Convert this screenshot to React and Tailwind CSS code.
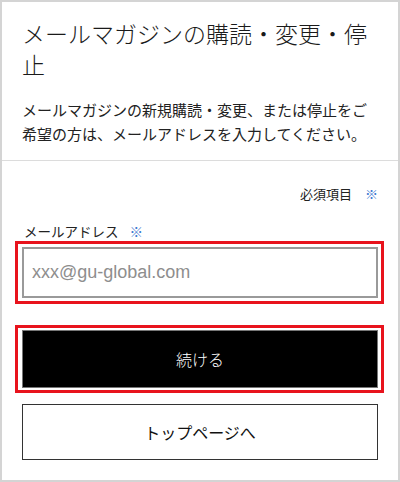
import React from 'react';

const App = () => {
  return (
    <div
      className="w-[400px] h-[482px] border-2 border-[#d4d4d4] bg-white text-[#1a1a1a] flex flex-col"
      style={{ fontFamily: '"Noto Sans CJK JP", "Noto Sans", sans-serif' }}
    >
      {/* header */}
      <div className="px-[20px] pt-[16px] pb-[14px] border-b border-[#dcdcdc]">
        <h1 className="text-[23px] leading-[31px] font-light">
          メールマガジンの購読・変更・停止
        </h1>
        <p className="mt-[18px] text-[15px] leading-[24px] text-[#222]">
          メールマガジンの新規購読・変更、または停止をご希望の方は、メールアドレスを入力してください。
        </p>
      </div>

      {/* form */}
      <div className="px-[20px] pt-[23px] flex flex-col">
        <div className="text-right text-[13px] leading-[20px] text-[#222]">
          必須項目<span className="ml-[13px] text-[#3b78d0]">※</span>
        </div>

        <div className="mt-[17px] text-[13.5px] leading-[20px] text-[#222] pl-[2px]">
          メールアドレス<span className="ml-[11px] text-[#3b78d0]">※</span>
        </div>

        <div className="relative mt-[6px]">
          <input
            type="email"
            placeholder="xxx@gu-global.com"
            className="w-full h-[51px] border-2 border-[#9a9a9a] px-[8px] text-[18px] text-[#222] placeholder:text-[#8e8e8e] outline-none"
            style={{ fontFamily: '"Liberation Sans", Arial, sans-serif' }}
          />
          <span className="absolute -left-[7px] -right-[6px] -top-[6px] -bottom-[6px] border-[3px] border-[#e8131d] pointer-events-none" />
        </div>

        <div className="relative mt-[32px]">
          <button className="w-full h-[58px] bg-black border border-[#777] text-white text-[16px] font-light">
            続ける
          </button>
          <span className="absolute -left-[7px] -right-[6px] -top-[5px] -bottom-[5px] border-[3px] border-[#e8131d] pointer-events-none" />
        </div>

        <button className="mt-[16px] w-full h-[56px] bg-white border-[1.5px] border-[#333] text-[#111] text-[16px]">
          トップページへ
        </button>
      </div>
    </div>
  );
};

export default App;
